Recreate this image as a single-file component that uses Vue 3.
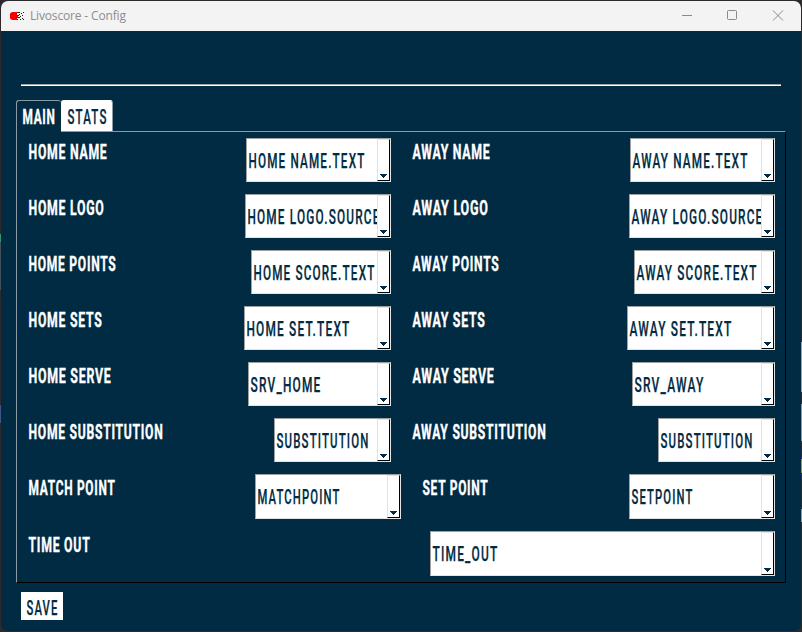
<script setup>
import { h } from 'vue'

const ink = (text, width) => ({ text, width })
const row = (homeLabel, homeBox, homeValue, awayLabel, awayBox, awayValue) => [
  { label: homeLabel, box: homeBox, value: homeValue },
  { label: awayLabel, box: awayBox, value: awayValue },
]

const rows = [
  row(ink('HOME NAME', 79), 145, ink('HOME NAME.TEXT', 117), ink('AWAY NAME', 78), 145, ink('AWAY NAME.TEXT', 116)),
  row(ink('HOME LOGO', 76), 146, ink('HOME LOGO.SOURCE', 133), ink('AWAY LOGO', 76), 146, ink('AWAY LOGO.SOURCE', 132)),
  row(ink('HOME POINTS', 88), 140, ink('HOME SCORE.TEXT', 122), ink('AWAY POINTS', 87), 141, ink('AWAY SCORE.TEXT', 121)),
  row(ink('HOME SETS', 74), 147, ink('HOME SET.TEXT', 104), ink('AWAY SETS', 73), 148, ink('AWAY SET.TEXT', 103)),
  row(ink('HOME SERVE', 83), 143, ink('SRV_HOME', 71), ink('AWAY SERVE', 82), 143, ink('SRV_AWAY', 70)),
  row(ink('HOME SUBSTITUTION', 135), 117, ink('SUBSTITUTION', 93), ink('AWAY SUBSTITUTION', 134), 117, ink('SUBSTITUTION', 93)),
  row(ink('MATCH POINT', 87), 146, ink('MATCHPOINT', 83), ink('SET POINT', 66), 146, ink('SETPOINT', 62)),
  [{ label: ink('TIME OUT', 62), box: 345, value: ink('TIME_OUT', 66) }],
]

const Caption = (props) =>
  h('svg', { width: props.width, height: 20, viewBox: `0 0 ${props.width} 20` }, [
    h('text', { x: 0.5, y: 17.3, textLength: props.width, lengthAdjust: 'spacingAndGlyphs' }, props.text),
  ])
Caption.props = ['text', 'width']
</script>

<template>
  <div class="desktop">
    <div class="window">
      <header class="titlebar">
        <svg class="app-icon" width="16" height="10" viewBox="0 0 16 10">
          <path d="M2 1h6v8H2L0 7.500V2.500z" fill="#f00" />
          <path d="M6 2h1v1H6zM8 1h2v1H8zM7 4h2v1H7zM9 3h1v1H9zM6 6h1v1H6zM8 6h2v1H8zM7 8h1v1H7zM11 2h1v1h-1zM13 1h1v1h-1zM12 4h1v1h-1zM10 5h1v1h-1zM12 7h1v1h-1zM10 8h1v1h-1zM13 8h1v1h-1z" fill="#222" />
          <path d="M7 2h1v2H7zM8 5h1v1H8zM7 7h1v1H7z" fill="#fff" />
        </svg>
        <span class="title">Livoscore - Config</span>
        <svg class="controls" width="102" height="11" viewBox="0 0 102 11">
          <path d="M0 5.5h10" />
          <rect x="45.5" y=".5" width="9" height="9" rx="1" />
          <path d="M91 .5l10 10M101 .5l-10 10" />
        </svg>
      </header>
      <main class="body">
        <div class="rule"></div>
        <nav class="tabs">
          <div class="tab active"><Caption class="caption bold" text="MAIN" :width="33" /></div>
          <div class="tab"><Caption class="caption" text="STATS" :width="40" /></div>
        </nav>
        <section class="panel">
          <div v-for="(cells, i) in rows" :key="i" class="row" :class="{ wide: i === 6, single: i === 7 }">
            <div v-for="cell in cells" :key="cell.label.text" class="cell">
              <Caption class="caption bold" v-bind="cell.label" />
              <div class="combo" :style="{ width: cell.box + 'px' }">
                <div class="value"><Caption class="caption" v-bind="cell.value" /></div>
                <div class="arrow">
                  <svg width="8" height="4" viewBox="0 0 8 4" shape-rendering="crispEdges"><path d="M0 0h7v1H6v1H5v1H4v1H3V3H2V2H1V1H0z" /></svg>
                </div>
              </div>
            </div>
          </div>
        </section>
        <button class="save"><Caption class="caption" text="SAVE" :width="32" /></button>
      </main>
    </div>
  </div>
</template>

<style>
body { margin: 0; overflow: hidden; }
</style>

<style scoped>
.desktop {
  box-sizing: border-box;
  width: 802px;
  height: 632px;
  padding: 1px;
  background:
    linear-gradient(transparent 234px, #2f9a70 234px 242px, #41505a 242px 290px, transparent 290px 405px, #3f5585 405px 423px, transparent 423px) left / 1px 100% no-repeat,
    linear-gradient(transparent 342px, #9aa5aa 342px 392px, transparent 392px 404px, #8c999f 404px 441px, transparent 441px 459px, #8fa035 459px 473px, transparent 473px 509px, #8c999f 509px 522px, transparent 522px) right / 1px 100% no-repeat,
    #2d2a2c;
}
.window {
  height: 630px;
  border-radius: 7px;
  overflow: hidden;
  background: #002b43;
}
.titlebar {
  display: flex;
  align-items: center;
  box-sizing: border-box;
  height: 30px;
  padding: 0 18px 0 9px;
  background: #f3f3f3;
}
.app-icon { margin-right: 4px; }
.title {
  font: 12px/16px "Open Sans", sans-serif;
  color: #8d8d8d;
  letter-spacing: -0.16px;
}
.controls {
  margin-left: auto;
  margin-right: -1px;
  margin-top: -1px;
  fill: none;
  stroke: #8a8a8a;
  stroke-width: 1;
}
.body { padding: 53px 15px 0; }
.rule {
  height: 1px;
  margin: 0 5px;
  border-top: 1px solid #a0a0a0;
  background: #fff;
}
.tabs { display: flex; margin-top: 14px; height: 31px; }
.tab {
  box-sizing: border-box;
  width: 52px;
  height: 31px;
  padding: 6px 0 0 5px;
  border: 1px solid #8a9ba5;
  border-top-color: #fff;
  border-left-color: #fff;
  border-bottom: 0;
  border-radius: 3px 3px 0 0;
  background: #fff;
}
.tab.active {
  position: relative;
  width: 45px;
  height: 32px;
  border-color: #8a9ba5;
  border-right: 0;
  background: #002b43;
}
.panel {
  box-sizing: border-box;
  width: 770px;
  height: 452px;
  padding: 6px 10px 0 11px;
  border: 1px solid #8a9ba5;
  border-right-color: #000;
  border-bottom-color: #000;
}
.row {
  display: grid;
  grid-template-columns: 363px 363px;
  column-gap: 21px;
  height: 44px;
  margin-bottom: 12px;
}
.row.wide { grid-template-columns: 373px 353px; height: 45px; }
.row.single { grid-template-columns: 747px; height: 45px; }
.cell { display: flex; justify-content: space-between; }
.cell > .caption { margin-top: 4px; }
.caption {
  display: block;
  flex: none;
  overflow: visible;
  font: 500 20px Roboto, sans-serif;
  letter-spacing: 2px;
  fill: #002b43;
  stroke: #002b43;
  stroke-width: 0.25px;
}
.caption.bold {
  font-weight: 700;
  letter-spacing: 1.2px;
  fill: #fff;
  stroke: #fff;
  stroke-width: 0.4px;
}
.combo {
  box-sizing: border-box;
  display: flex;
  border: 1px solid #a0a0a0;
  border-right-color: #e3e3e3;
  border-bottom-color: #e3e3e3;
  background: #fff;
}
.value {
  flex: 1;
  min-width: 0;
  padding: 12px 0 0 1px;
  overflow: hidden;
}
.arrow {
  box-sizing: border-box;
  display: flex;
  flex: none;
  align-items: flex-end;
  justify-content: center;
  width: 13px;
  padding-bottom: 2px;
  border: 1px solid #e3e3e3;
  border-right-color: #000;
  border-bottom-color: #000;
  fill: #002b43;
}
.save {
  display: block;
  width: 42px;
  height: 28px;
  margin: 9px 0 0 5px;
  padding: 3px 0 0 5px;
  border: 0;
  background: #fff;
}
</style>
